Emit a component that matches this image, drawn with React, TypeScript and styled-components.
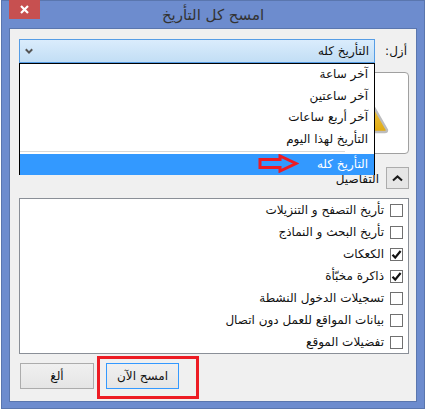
import React from 'react';
import styled, {createGlobalStyle} from 'styled-components';

const GlobalStyle = createGlobalStyle`
	html, body {
		margin: 0;
		padding: 0;
		background: #fff;
	}
	body {
		font-family: 'DejaVu Sans', 'Noto Sans', sans-serif;
		font-size: 12px;
		color: #111;
	}
`;

const Page = styled.div`
	width: 428px;
	height: 414px;
	padding-left: 1px;
	box-sizing: border-box;
	overflow: hidden;
`;

const Dialog = styled.div`
	position: relative;
	width: 424px;
	height: 409px;
	box-sizing: border-box;
	display: flex;
	flex-direction: column;
	background: #6d8cce;
	border: 1px solid #5a76ae;
`;

const TitleBar = styled.div`
	height: 27px;
	display: flex;
	align-items: center;
	justify-content: center;
	position: relative;
	flex-shrink: 0;
`;

const Title = styled.div`
	font-size: 15px;
	color: #333;
	padding-top: 1px;
`;

const CloseButton = styled.div`
	position: absolute;
	left: 7px;
	top: -1px;
	width: 31px;
	height: 19px;
	background: #c75050;
	display: flex;
	align-items: center;
	justify-content: center;
`;

const Content = styled.div`
	flex: 1;
	margin: 0 7px 6px 7px;
	padding: 10px 7px 0 9px;
	background: #f0f0f0;
	border: 1px solid #5a76ae;
	display: flex;
	flex-direction: column;
	min-height: 0;
`;

const RemoveRow = styled.div`
	display: flex;
	align-items: center;
	height: 24px;
	position: relative;
	z-index: 2;
`;

const RemoveLabel = styled.label`
	width: 34px;
	padding-right: 2px;
	box-sizing: border-box;
	font-size: 12px;
`;

const ComboWrap = styled.div`
	position: relative;
	width: 356px;
	height: 24px;
`;

const Combo = styled.div`
	height: 24px;
	box-sizing: border-box;
	display: flex;
	align-items: center;
	justify-content: space-between;
	padding: 0 5px 0 5px;
	background: linear-gradient(#daecfc, #c2def5);
	border: 1px solid #569de5;
	font-size: 12px;
`;

const DropList = styled.ul`
	position: absolute;
	top: 24px;
	left: 0;
	right: 0;
	height: 112px;
	box-sizing: border-box;
	margin: 0;
	padding: 0;
	list-style: none;
	background: #fff;
	border: 1px solid #000;
`;

const DropItem = styled.li<{$selected?: boolean}>`
	position: relative;
	height: ${p => (p.$selected ? '21px' : '21.5px')};
	line-height: ${p => (p.$selected ? '21px' : '21.5px')};
	padding-right: 6px;
	font-size: 12px;
	background: ${p => (p.$selected ? '#3399ff' : 'transparent')};
	color: ${p => (p.$selected ? '#fff' : '#111')};
`;

const DropSeparator = styled.li`
	height: 1px;
	margin: 1px 29px 2px 0;
	background: #d8d8d8;
`;

const WarningBox = styled.div`
	height: 82px;
	box-sizing: border-box;
	margin-top: 9px;
	padding: 5px 19px 0 0;
	background: #fff;
	border: 1px solid #a0a0a0;
	border-radius: 4px;
`;

const DetailsRow = styled.div`
	display: flex;
	align-items: center;
	gap: 7px;
	margin-top: 13px;
	height: 22px;
`;

const DetailsButton = styled.div`
	width: 23px;
	height: 22px;
	box-sizing: border-box;
	display: flex;
	align-items: center;
	justify-content: center;
	background: #e6e6e6;
	border: 1px solid #acacac;
`;

const DetailsLabel = styled.span`
	font-size: 12px;
	padding-top: 1px;
`;

const CheckList = styled.div`
	height: 156px;
	box-sizing: border-box;
	margin-top: 9px;
	padding: 5px 5px 0 0;
	background: #fff;
	border: 1px solid #8a8f97;
	display: flex;
	flex-direction: column;
	gap: 9px;
`;

const CheckRow = styled.div`
	display: flex;
	align-items: center;
	gap: 6px;
	height: 13px;
	font-size: 12px;
	white-space: nowrap;
`;

const CheckBox = styled.span`
	width: 13px;
	height: 13px;
	box-sizing: border-box;
	display: flex;
	align-items: center;
	justify-content: center;
	background: #fff;
	border: 1px solid #707070;
	flex-shrink: 0;
`;

const RowText = styled.span`
	position: relative;
	top: -1px;
`;

const Footer = styled.div`
	display: flex;
	justify-content: flex-end;
	gap: 12px;
	margin-top: 9px;
	margin-left: 1px;
`;

const FooterButton = styled.div<{$primary?: boolean}>`
	width: ${p => (p.$primary ? '73px' : '74px')};
	height: 26px;
	box-sizing: border-box;
	display: flex;
	align-items: center;
	justify-content: center;
	font-size: 12px;
	background: linear-gradient(#f0f0f0, #e5e5e5);
	border: 1px solid ${p => (p.$primary ? '#3399ff' : '#acacac')};
`;

const RedFrame = styled.div`
	position: absolute;
	left: 95px;
	top: 355px;
	width: 102px;
	height: 43px;
	box-sizing: border-box;
	border: 3px solid #ed1c24;
	pointer-events: none;
`;

const RedArrow = styled.svg`
	position: absolute;
	left: 238px;
	top: 0;
`;

const CloseIcon = () => (
	<svg width="9" height="9" viewBox="0 0 9 9">
		<path d="M1 1 L8 8 M8 1 L1 8" stroke="#fff" strokeWidth="2.2" fill="none" />
	</svg>
);

const DownChevron = () => (
	<svg width="8" height="7" viewBox="0 0 8 7">
		<path d="M0.8 1.2 L4 4.6 L7.2 1.2" stroke="#555" strokeWidth="2" fill="none" />
	</svg>
);

const UpChevron = () => (
	<svg width="11" height="7" viewBox="0 0 11 7">
		<path d="M1 5.6 L5.5 1.4 L10 5.6" stroke="#1a1a1a" strokeWidth="2" fill="none" />
	</svg>
);

const CheckMark = () => (
	<svg width="11" height="11" viewBox="0 0 11 11">
		<path d="M1.5 5.8 L4.2 8.6 L9.6 2" stroke="#111" strokeWidth="2.2" fill="none" />
	</svg>
);

const WarningTriangle = () => (
	<svg width="60" height="56" viewBox="0 0 60 56">
		<defs>
			<linearGradient id="warn" x1="0" y1="0" x2="0" y2="1">
				<stop offset="0" stopColor="#fbe07a" />
				<stop offset="1" stopColor="#e0a90f" />
			</linearGradient>
		</defs>
		<path d="M30 3 L58 52 Q58 54 56 54 L4 54 Q2 54 2 52 Z" fill="url(#warn)" stroke="#bdbdbd" strokeWidth="2.4" />
	</svg>
);

const ranges = ['آخر ساعة', 'آخر ساعتين', 'آخر أربع ساعات', 'التأريخ لهذا اليوم'];

const historyItems = [
	{label: 'تأريخ التصفح و التنزيلات', checked: false},
	{label: 'تأريخ البحث و النماذج', checked: false},
	{label: 'الكعكات', checked: true},
	{label: 'ذاكرة مخبّأة', checked: true},
	{label: 'تسجيلات الدخول النشطة', checked: false},
	{label: 'بيانات المواقع للعمل دون اتصال', checked: false},
	{label: 'تفضيلات الموقع', checked: false}
];

const App = () => (
	<Page>
		<GlobalStyle />
		<Dialog dir="rtl">
			<TitleBar>
				<Title>امسح كل التأريخ</Title>
				<CloseButton>
					<CloseIcon />
				</CloseButton>
			</TitleBar>
			<Content>
				<RemoveRow>
					<RemoveLabel>أزل:</RemoveLabel>
					<ComboWrap>
						<Combo>
							<span>التأريخ كله</span>
							<DownChevron />
						</Combo>
						<DropList>
							{ranges.map(range => (
								<DropItem key={range}>{range}</DropItem>
							))}
							<DropSeparator />
							<DropItem $selected>
								التأريخ كله
								<RedArrow width="41" height="19" viewBox="0 0 41 19">
									<path d="M2 5.5 H22 V2 L38 9.5 L22 17 V13.5 H2 Z" fill="none" stroke="#ed1c24" strokeWidth="3" />
								</RedArrow>
							</DropItem>
						</DropList>
					</ComboWrap>
				</RemoveRow>
				<WarningBox>
					<WarningTriangle />
				</WarningBox>
				<DetailsRow>
					<DetailsButton>
						<UpChevron />
					</DetailsButton>
					<DetailsLabel>التفاصيل</DetailsLabel>
				</DetailsRow>
				<CheckList>
					{historyItems.map(item => (
						<CheckRow key={item.label}>
							<CheckBox>{item.checked && <CheckMark />}</CheckBox>
							<RowText>{item.label}</RowText>
						</CheckRow>
					))}
				</CheckList>
				<Footer>
					<FooterButton $primary>امسح الآن</FooterButton>
					<FooterButton>ألغ</FooterButton>
				</Footer>
			</Content>
			<RedFrame />
		</Dialog>
	</Page>
);

export default App;
